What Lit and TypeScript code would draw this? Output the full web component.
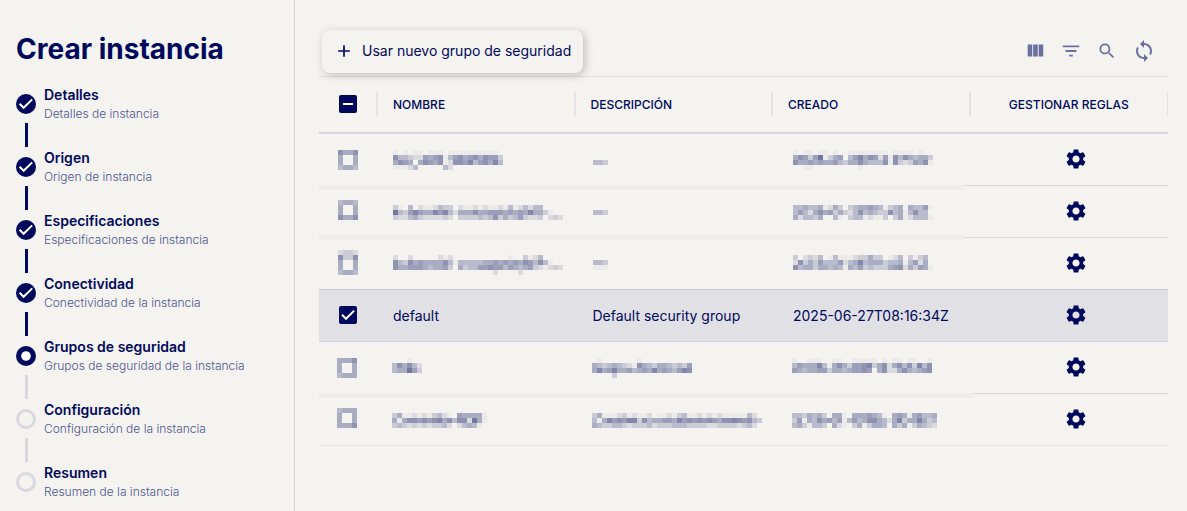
import { LitElement, html, svg, css, nothing } from "lit";
import { customElement, property } from "lit/decorators.js";
import { classMap } from "lit/directives/class-map.js";

type StepState = "done" | "current" | "pending";

interface Step {
  title: string;
  detail: string;
  state: StepState;
}

interface Group {
  name: string | string[];
  description: string | string[];
  created: string | string[];
  box?: string[];
  checked?: boolean;
  snap: string;
}

const STEPS: Step[] = [
  { title: "Detalles", detail: "Detalles de instancia", state: "done" },
  { title: "Origen", detail: "Origen de instancia", state: "done" },
  { title: "Especificaciones", detail: "Especificaciones de instancia", state: "done" },
  { title: "Conectividad", detail: "Conectividad de la instancia", state: "done" },
  { title: "Grupos de seguridad", detail: "Grupos de seguridad de la instancia", state: "current" },
  { title: "Configuración", detail: "Configuración de la instancia", state: "pending" },
  { title: "Resumen", detail: "Resumen de la instancia", state: "pending" },
];

/* Masked values: every digit is the ink level of one 5px cell. */
const GROUPS: Group[] = [
  {
    snap: "high band-low",
    box: ["7557", "5005", "5005", "4554"],
    name: [
      "1010110111011111111110",
      "7443226567146756757663",
      "5765057657127768467584",
      "1112400000420000000000",
    ],
    description: ["", "", "443"],
    created: [
      "1011011010011111111011110100",
      "5763691356046857626174754553",
      "7556565564355754447173236571",
      "0011000000000100",
    ],
  },
  {
    snap: "mid band-mid",
    box: ["4554", "5005", "5005", "7557"],
    name: [
      "",
      "3104021124330211212112141242440000",
      "9436865586842555755666565658553100",
      "3224532222320333343473534632230232",
    ],
    description: ["", "", "443"],
    created: [
      "",
      "4454451253034556541345054461",
      "4642575635324745433745147440",
      "5244350041034412113035124441",
    ],
  },
  {
    snap: "low",
    box: ["2332", "7337", "5005", "5005", "4554"],
    name: [
      "",
      "2002000002120000000000010031240000",
      "7437565555741444445565656576474100",
      "7556665455630534466766465456321232",
      "00000000000000000000200002",
    ],
    description: ["", "", "443", "111"],
    created: [
      "",
      "3023240141112335330124031340",
      "2735364446245845553445146250",
      "7455355454154634333567253651",
    ],
  },
  {
    snap: "plain",
    checked: true,
    name: "default",
    description: "Default security group",
    created: "2025-06-27T08:16:34Z",
  },
  {
    snap: "high band-low wide shifted",
    box: ["5557", "5005", "5005", "4555"],
    name: ["000100", "475742", "455963"],
    description: [
      "01000000010000000000",
      "54345432175435543436",
      "58568556456585654687",
      "00003",
    ],
    created: [
      "1001110011001111101011011001",
      "4655584157536678357257473847",
      "6545566355456676057225754567",
    ],
  },
  {
    snap: "mid shifted",
    box: ["4555", "5005", "5005", "5557"],
    name: ["", "3511212134210655551", "5157767678574772951", "3432323233420245410"],
    description: [
      "",
      "3511123121120112134112121211111420",
      "4158676883745566586767676577876743",
      "5433443233342333444333322333323420",
    ],
    created: [
      "",
      "44354530551055565410565156445",
      "36154756461464577542583558534",
      "45314430521035135540535135432",
    ],
  },
];

const CELL = 5;
const INK = [0, 0.03, 0.1, 0.17, 0.24, 0.3, 0.36, 0.41, 0.46, 0.53];

function mosaic(rows: string[]) {
  const cols = Math.max(...rows.map((r) => r.length));
  const cells = rows.flatMap((row, y) =>
    [...row].map((level, x) =>
      level === "0"
        ? nothing
        : svg`<rect x=${x * CELL} y=${y * CELL} width=${CELL} height=${CELL} fill-opacity=${INK[Number(level)]}></rect>`
    )
  );
  return html`<svg class="mosaic" aria-hidden="true" width=${cols * CELL} height=${rows.length * CELL}
    shape-rendering="crispEdges">${cells}</svg>`;
}

const icon = (path: string, cls = "icon") =>
  html`<svg class=${cls} viewBox="0 0 24 24" aria-hidden="true"><path d=${path}></path></svg>`;

const PLUS = "M19 13h-6v6h-2v-6H5v-2h6V5h2v6h6v2z";
const COLUMNS = "M10 18h5V5h-5v13zm-6 0h5V5H4v13zM16 5v13h5V5h-5z";
const FILTER = "M10 18h4v-2h-4v2zM3 6v2h18V6H3zm3 7h12v-2H6v2z";
const SEARCH =
  "M15.5 14h-.79l-.28-.27C15.41 12.59 16 11.11 16 9.5 16 5.91 13.09 3 9.5 3S3 5.91 3 9.5 5.91 16 9.5 16c1.61 0 3.09-.59 4.23-1.57l.27.28v.79l5 4.99L20.49 19l-4.99-5zm-6 0C7.01 14 5 11.99 5 9.5S7.01 5 9.5 5 14 7.01 14 9.5 11.99 14 9.5 14z";
const SYNC =
  "M12 4V1L8 5l4 4V6c3.31 0 6 2.69 6 6 0 1.01-.25 1.97-.7 2.8l1.46 1.46C19.54 15.03 20 13.57 20 12c0-4.42-3.58-8-8-8zm0 14c-3.31 0-6-2.69-6-6 0-1.01.25-1.97.7-2.8L5.24 7.74C4.46 8.97 4 10.43 4 12c0 4.42 3.58 8 8 8v3l4-4-4-4v3z";
const GEAR =
  "M19.14 12.94c.04-.3.06-.61.06-.94 0-.32-.02-.64-.07-.94l2.03-1.58c.18-.14.23-.41.12-.61l-1.92-3.32c-.12-.22-.37-.29-.59-.22l-2.39.96c-.5-.38-1.03-.7-1.62-.94l-.36-2.54c-.04-.24-.24-.41-.48-.41h-3.84c-.24 0-.43.17-.47.41l-.36 2.54c-.59.24-1.13.57-1.62.94l-2.39-.96c-.22-.08-.47 0-.59.22L2.74 8.87c-.12.21-.08.47.12.61l2.03 1.58c-.05.3-.09.63-.09.94s.02.64.07.94l-2.03 1.58c-.18.14-.23.41-.12.61l1.92 3.32c.12.22.37.29.59.22l2.39-.96c.5.38 1.03.7 1.62.94l.36 2.54c.05.24.24.41.48.41h3.84c.24 0 .44-.17.47-.41l.36-2.54c.59-.24 1.13-.56 1.62-.94l2.39.96c.22.08.47 0 .59-.22l1.92-3.32c.12-.22.07-.47-.12-.61l-2.01-1.58zM12 15.6c-1.98 0-3.6-1.62-3.6-3.6s1.62-3.6 3.6-3.6 3.6 1.62 3.6 3.6-1.62 3.6-3.6 3.6z";

@customElement("wizard-steps")
export class WizardSteps extends LitElement {
  @property({ attribute: false }) steps: Step[] = [];

  static styles = css`
    :host {
      display: block;
    }
    .steps {
      list-style: none;
      margin: 0;
      padding: 0;
    }
    .head {
      display: grid;
      grid-template-columns: 20px 1fr;
      column-gap: 8px;
      align-items: center;
    }
    .dot {
      display: block;
      width: 20px;
      height: 20px;
    }
    .title,
    .detail {
      display: block;
      white-space: nowrap;
    }
    .title {
      font-size: 14px;
      line-height: 20px;
      font-weight: 600;
      color: #00095b;
    }
    .detail {
      font-size: 12px;
      line-height: 18px;
      font-weight: 300;
      color: #4d5390;
    }
    .line {
      width: 3px;
      height: 24px;
      margin: 0 0 1px 9px;
      background: #00095b;
    }
    .line.idle {
      background: #d9d8de;
    }
  `;

  private dot(state: StepState) {
    if (state === "done") {
      return html`<svg class="dot" viewBox="0 0 20 20" aria-hidden="true">
        <circle cx="10" cy="10" r="10" fill="#00095b"></circle>
        <path d="M3.6 9.8l4 4 8.6-8.4" fill="none" stroke="#fff" stroke-width="2"></path>
      </svg>`;
    }
    if (state === "current") {
      return html`<svg class="dot" viewBox="0 0 20 20" aria-hidden="true">
        <circle cx="10" cy="10" r="7.4" fill="#fff" stroke="#00095b" stroke-width="5.2"></circle>
      </svg>`;
    }
    return html`<svg class="dot" viewBox="0 0 20 20" aria-hidden="true">
      <circle cx="10" cy="10" r="8.5" fill="none" stroke="#d9d8de" stroke-width="3"></circle>
    </svg>`;
  }

  render() {
    return html`<ol class="steps">
      ${this.steps.map(
        (s, i) => html`<li aria-current=${s.state === "current" ? "step" : nothing}>
          <div class="head">
            ${this.dot(s.state)}
            <div>
              <span class="title">${s.title}</span>
              <span class="detail">${s.detail}</span>
            </div>
          </div>
          ${i < this.steps.length - 1
            ? html`<div class=${classMap({ line: true, idle: s.state !== "done" })}></div>`
            : nothing}
        </li>`
      )}
    </ol>`;
  }
}

@customElement("app-root")
export class AppRoot extends LitElement {
  static styles = css`
    :host {
      display: flex;
      min-height: 100vh;
      box-sizing: border-box;
      background: #f4f3ef;
      color: #00095b;
      font-family: Inter, "Liberation Sans", sans-serif;
      font-size: 14px;
    }
    .side {
      flex: none;
      box-sizing: border-box;
      width: 295px;
      padding: 31px 16px 0;
      border-right: 1px solid #d4d3dc;
    }
    .heading {
      margin: 0 0 18px;
      font-size: 28px;
      line-height: 36px;
      font-weight: 700;
      white-space: nowrap;
    }
    .main {
      flex: 1;
      min-width: 0;
      padding: 26px 19px 0 24px;
    }
    .bar {
      display: flex;
      align-items: center;
      justify-content: space-between;
      height: 50px;
      padding: 0 12px 0 3px;
      border-bottom: 1px solid #dedde8;
    }
    button {
      margin: 0;
      padding: 0;
      border: 0;
      background: none;
      color: inherit;
      font: inherit;
      cursor: pointer;
    }
    .add {
      display: flex;
      align-items: center;
      gap: 8px;
      height: 43px;
      padding: 0 12px;
      border-radius: 8px;
      background: #f4f3ef;
      box-shadow: 2px 2px 8px rgba(0, 0, 0, 0.22);
      line-height: 20px;
      white-space: nowrap;
    }
    .tools {
      display: flex;
      align-items: center;
      gap: 14px;
      color: #6c70a0;
    }
    .tool {
      display: inline-flex;
      align-items: center;
      justify-content: center;
      min-width: 22px;
    }
    .gear {
      display: inline-flex;
      vertical-align: middle;
    }
    .icon {
      width: 22px;
      height: 22px;
      fill: currentColor;
    }
    .small {
      width: 20px;
      height: 20px;
      fill: currentColor;
    }
    .large {
      width: 24px;
      height: 24px;
      fill: currentColor;
    }
    .grid {
      width: 100%;
      table-layout: fixed;
      border-collapse: separate;
      border-spacing: 0;
    }
    .pick {
      width: 59px;
    }
    th {
      height: 54px;
      padding: 0 0 1px;
      border-bottom: 2px solid #d6d6e2;
      font-size: 12px;
      line-height: 26px;
      font-weight: 500;
      text-align: left;
    }
    .label {
      display: block;
      height: 24px;
      padding-left: 15px;
      border-right: 2px solid #e3e2e5;
      white-space: nowrap;
    }
    .label.center {
      padding-left: 0;
      border-right-width: 1px;
      text-align: center;
    }
    .label.boxed {
      display: flex;
      align-items: center;
      padding-left: 20px;
    }
    tr {
      position: relative;
    }
    td {
      height: 51px;
      padding: 0 0 0 15px;
      border-bottom: 1px solid #d6d5de;
      vertical-align: top;
      line-height: 51px;
      white-space: nowrap;
    }
    tr:last-child td {
      border-bottom-color: #e2e1e8;
    }
    .desc {
      padding-left: 17px;
    }
    .date {
      padding-left: 20px;
    }
    .first {
      padding-left: 19px;
    }
    .rules {
      padding-left: 14px;
      line-height: 47px;
      text-align: center;
    }
    .plain .first {
      padding-left: 20px;
    }
    .plain td {
      background: #e1e0e5;
      border-bottom-color: #d3d2e0;
      box-shadow: 0 -1px 0 #c6c5d6;
    }
    .shifted .first {
      padding-left: 18px;
    }
    .shifted .name {
      padding-left: 14px;
    }
    .shifted .desc {
      padding-left: 16px;
    }
    .shifted .date {
      padding-left: 19px;
    }
    .mosaic {
      display: block;
      margin-top: 16px;
      fill: #00095b;
    }
    .mid .mosaic {
      margin-top: 14px;
    }
    .low .mosaic {
      margin-top: 12px;
    }
    .band-low .first::after,
    .band-mid .first::after {
      content: "";
      position: absolute;
      left: 0;
      bottom: -4px;
      width: 76%;
      height: 5px;
      background: #eeedea;
    }
    .band-mid .first::after {
      bottom: -2px;
    }
    .wide .first::after {
      width: 77%;
    }
    .masked {
      display: grid;
      width: 20px;
    }
    .masked > * {
      grid-area: 1 / 1;
    }
    .masked .check {
      width: 20px;
      height: 20px;
      margin: 14px 0 0;
      background: none;
    }
    .check {
      appearance: none;
      display: block;
      width: 18px;
      height: 18px;
      margin: 0;
      border-radius: 2px;
      background: #00095b;
    }
    .tick {
      display: grid;
      width: 18px;
    }
    .tick > * {
      grid-area: 1 / 1;
    }
    .plain .tick {
      margin-top: 16px;
    }
    .mark {
      width: 18px;
      height: 18px;
      fill: none;
      stroke: #fff;
      stroke-width: 2;
      pointer-events: none;
    }
  `;

  private value(v: string | string[]) {
    return typeof v === "string" ? v : mosaic(v);
  }

  private row(g: Group, i: number) {
    const label = `Seleccionar fila ${i + 1}`;
    return html`<tr class=${g.snap}>
      <td class="first">
        ${g.box
          ? html`<div class="masked">${mosaic(g.box)}<input class="check" type="checkbox" aria-label=${label} /></div>`
          : html`<div class="tick">
              <input class="check" type="checkbox" aria-label=${label} .checked=${!!g.checked} />
              <svg class="mark" viewBox="0 0 18 18" aria-hidden="true"><path d="M3 8.8l4 4L15.2 4.6"></path></svg>
            </div>`}
      </td>
      <td class="name">${this.value(g.name)}</td>
      <td class="desc">${this.value(g.description)}</td>
      <td class="date">${this.value(g.created)}</td>
      <td class="rules"><button class="gear" aria-label="Gestionar reglas">${icon(GEAR, "large")}</button></td>
    </tr>`;
  }

  render() {
    return html`
      <aside class="side">
        <h1 class="heading">Crear instancia</h1>
        <wizard-steps .steps=${STEPS}></wizard-steps>
      </aside>
      <main class="main">
        <div class="bar">
          <button class="add">${icon(PLUS, "small")}<span>Usar nuevo grupo de seguridad</span></button>
          <div class="tools">
            <button class="tool" aria-label="Columnas">${icon(COLUMNS)}</button>
            <button class="tool" aria-label="Filtrar">${icon(FILTER)}</button>
            <button class="tool" aria-label="Buscar">${icon(SEARCH, "small")}</button>
            <button class="tool" aria-label="Actualizar">${icon(SYNC, "large")}</button>
          </div>
        </div>
        <table class="grid">
          <thead>
            <tr>
              <th class="pick">
                <div class="label boxed">
                  <div class="tick">
                    <input class="check" type="checkbox" aria-label="Seleccionar todo" .indeterminate=${true} />
                    <svg class="mark" viewBox="0 0 18 18" aria-hidden="true"><path d="M4 9h10"></path></svg>
                  </div>
                </div>
              </th>
              <th><span class="label">NOMBRE</span></th>
              <th><span class="label">DESCRIPCIÓN</span></th>
              <th><span class="label">CREADO</span></th>
              <th><span class="label center">GESTIONAR REGLAS</span></th>
            </tr>
          </thead>
          <tbody>
            ${GROUPS.map((g, i) => this.row(g, i))}
          </tbody>
        </table>
      </main>
    `;
  }
}
